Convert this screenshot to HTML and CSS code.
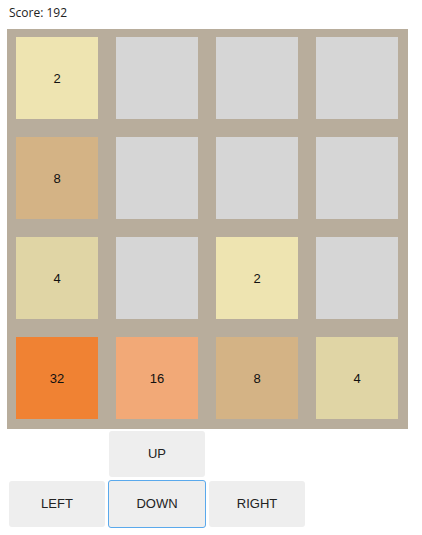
FILE: index.html
```html
<!DOCTYPE html>
<html lang="en">
<head>
    <meta charset="UTF-8">
    <meta name="viewport" content="width=device-width, initial-scale=1.0">
    <title>2048</title>
    <link rel="stylesheet" href="styles.css">
</head>
<body>
    <p class="score">Score: 192</p>

    <div class="board">
        <div class="tile t2">2</div>
        <div class="tile"></div>
        <div class="tile"></div>
        <div class="tile"></div>

        <div class="tile t8">8</div>
        <div class="tile"></div>
        <div class="tile"></div>
        <div class="tile"></div>

        <div class="tile t4">4</div>
        <div class="tile"></div>
        <div class="tile t2">2</div>
        <div class="tile"></div>

        <div class="tile t32">32</div>
        <div class="tile t16">16</div>
        <div class="tile t8">8</div>
        <div class="tile t4">4</div>
    </div>

    <div class="controls">
        <div class="row">
            <span class="spacer"></span>
            <button>UP</button>
        </div>
        <div class="row">
            <button>LEFT</button>
            <button class="focus">DOWN</button>
            <button>RIGHT</button>
        </div>
    </div>
</body>
</html>
```

FILE: styles.css
```css
body{
    margin: 0;
    padding: 4px 0 0 7px;
    font-family: "Liberation Sans", Arial, sans-serif;
    background-color: #fff;
}

.score{
    font-family: "Open Sans", sans-serif;
    font-size: 12px;
    color: #222;
    margin: 0 0 6px 2px;
    height: 19px;
    line-height: 17px;
}

.board{
    width: 401px;
    box-sizing: border-box;
    padding: 8px 10px 10px 9px;
    background-color: #b8ad9c;
    display: grid;
    grid-template-columns: repeat(4, 82px);
    grid-auto-rows: 82px;
    gap: 18px;
}

.tile{
    background-color: #d6d6d6;
    display: flex;
    justify-content: center;
    align-items: center;
    font-size: 13px;
    color: #111;

    &.t2{ background-color: #eee4b1; }
    &.t4{ background-color: #e0d5a5; }
    &.t8{ background-color: #d4b385; }
    &.t16{ background-color: #f2a977; }
    &.t32{ background-color: #f08233; }
}

.controls{
    display: flex;
    flex-direction: column;
    gap: 4px;
    margin: 2px 0 0 2px;
}

.row{
    display: flex;
    gap: 4px;
}

.spacer{
    width: 96px;
}

button{
    width: 96px;
    height: 46px;
    padding: 0 0 2px;
    border: 0;
    border-radius: 3px;
    background-color: #eee;
    font-family: "Liberation Sans", Arial, sans-serif;
    font-size: 13px;
    color: #222;
    cursor: pointer;

    /* boton con foco */
    &.focus{
        width: 98px;
        height: 48px;
        margin: -1px -1px 0;
        border: 1px solid #5aa9ec;
    }
}
```
